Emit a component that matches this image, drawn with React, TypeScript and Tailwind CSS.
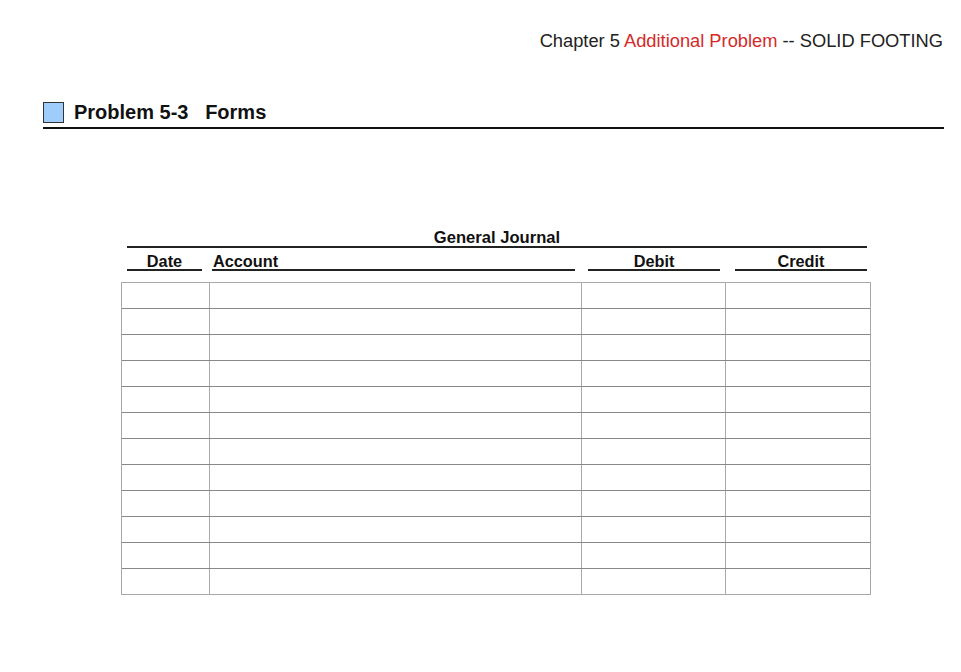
import React from 'react'

const rows = Array.from({ length: 12 })

export default function App() {
  return (
    <div className="min-h-[672px] w-[961px] bg-white font-['Liberation_Sans',Arial,sans-serif] text-[#111]">
      <div className="flex justify-end pr-[18px] pt-[30px] text-[18.3px] leading-[22px] text-[#222]">
        <span>
          Chapter 5 <span className="text-[#d42a2a]">Additional Problem</span> -- SOLID FOOTING
        </span>
      </div>

      <div className="ml-[43px] mt-[48px] w-[901px] border-b-2 border-[#111] pb-[3px]">
        <div className="flex h-[24px] items-center gap-[10px]">
          <div className="h-[21px] w-[21px] border border-[#333] bg-[#9fcdfb]" />
          <h1 className="text-[20px] font-bold leading-[24px] whitespace-pre">Problem 5-3   Forms</h1>
        </div>
      </div>

      <div className="ml-[127px] mt-[99px] w-[740px]">
        <div className="border-b-2 border-[#222] pt-[1px] text-center text-[16.6px] font-bold leading-[17px]">
          General Journal
        </div>
        <div className="mt-[5px] flex text-[16.3px] font-bold leading-[16px]">
          <div className="w-[75px] border-b-2 border-[#222] text-center">Date</div>
          <div className="ml-[10px] w-[363px] border-b-2 border-[#222] pl-[1px]">Account</div>
          <div className="ml-[13px] w-[132px] border-b-2 border-[#222] text-center">Debit</div>
          <div className="ml-[15px] w-[132px] border-b-2 border-[#222] text-center">Credit</div>
        </div>
      </div>

      <div className="ml-[121px] mt-[11px] w-[750px] border border-[#a8a8a8]">
        {rows.map((_, i) => (
          <div
            key={i}
            className={`grid grid-cols-[88px_372px_144px_1fr] ${i > 0 ? 'h-[26px] border-t border-[#888]' : 'h-[25px]'}`}
          >
            <div className="border-r border-[#aaa]" />
            <div className="border-r border-[#aaa]" />
            <div className="border-r border-[#aaa]" />
            <div />
          </div>
        ))}
      </div>
    </div>
  )
}
